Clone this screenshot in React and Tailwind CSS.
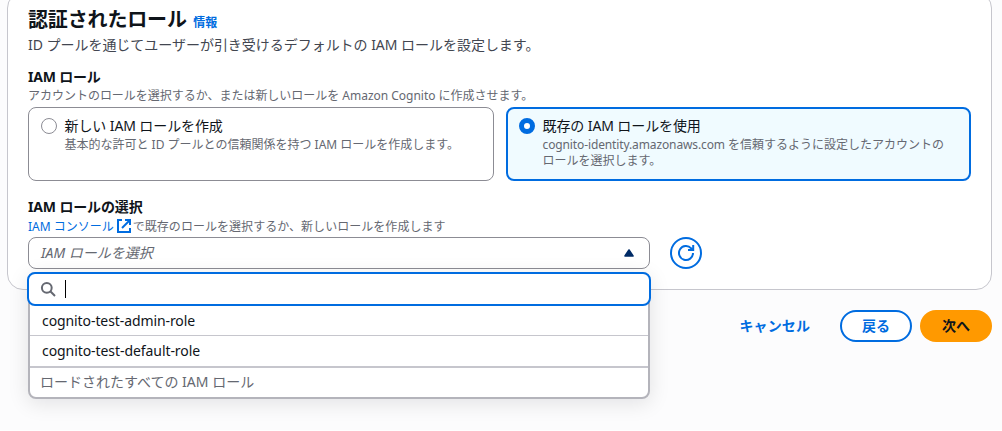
const ROLES = ['cognito-test-admin-role', 'cognito-test-default-role'];

function RoleOption({ checked, title, children }) {
  return (
    <div
      className={
        checked
          ? 'flex h-[74px] rounded-lg border-2 border-[#006ce0] bg-[#f0fbff] pt-[7px] pl-[11px]'
          : 'flex h-[74px] rounded-lg border border-[#8c8c94] bg-white pt-2 pl-3'
      }
    >
      <span
        className={
          checked
            ? 'mt-[2px] h-4 w-4 shrink-0 rounded-full border-5 border-[#006ce0] bg-white'
            : 'mt-[2px] h-4 w-4 shrink-0 rounded-full border border-[#8c8c94] bg-white'
        }
      />
      <div className="ml-[7.5px]">
        <div className="h-5 text-sm leading-5 tracking-[-0.1px] whitespace-nowrap text-[#0f141a]">{title}</div>
        <div className="mt-px text-xs leading-4 whitespace-nowrap text-[#656871]">{children}</div>
      </div>
    </div>
  );
}

function ExternalIcon() {
  return (
    <svg className="mr-px ml-[2px] inline-block h-4 w-4 align-[-3px]" viewBox="0 0 16 16" fill="none" stroke="#006ce0" strokeWidth="2">
      <path d="M6 2H2v12h12v-4" />
      <path d="M9 2h5v5" />
      <path d="M6 10l8-8" />
    </svg>
  );
}

function RefreshIcon() {
  return (
    <svg className="h-4 w-4 overflow-visible" viewBox="0 0 16 16" fill="none" stroke="#006ce0" strokeWidth="2">
      <path d="M15 8a7 7 0 1 1-1.8-4.7L15 5" />
      <path d="M15.2 0v5H10" />
    </svg>
  );
}

function RoleMenu() {
  return (
    <div className="absolute top-[35px] left-[-1px] w-[624px]">
      <div className="relative z-10 flex h-[34px] items-center rounded-lg border-2 border-[#006ce0] bg-white pl-[11px]">
        <svg className="h-4 w-4" viewBox="0 0 16 16" fill="none" stroke="#656871" strokeWidth="2">
          <circle cx="6.8" cy="6.8" r="4.9" />
          <path d="M10.3 10.3l4.7 4.7" />
        </svg>
        <span className="ml-[9px] h-[18px] w-px bg-black" />
      </div>
      <div className="mx-px -mt-[34px] rounded-lg border-2 border-[#b4b4bb] bg-white pt-[32px] shadow-[0_4px_20px_1px_rgba(0,7,22,0.10)]">
        <div className="h-[30px] border-b border-[#c6c6cd] pl-3 text-sm leading-[29px] tracking-[-0.09px] text-[#0f141a]">{ROLES[0]}</div>
        <div className="h-8 border-b-2 border-[#c6c6cd] pl-3 text-sm leading-[30px] tracking-[-0.07px] text-[#0f141a]">{ROLES[1]}</div>
        <div className="h-[29px] pl-[10px] text-sm leading-[28px] text-[#656871]">ロードされたすべての IAM ロール</div>
      </div>
    </div>
  );
}

export default function App() {
  return (
    <div lang="ja" className="h-[431px] w-[1002px] overflow-hidden border-b border-white bg-[#fcfcfd] px-[7px] font-['Noto_Sans','Noto_Sans_CJK_JP',sans-serif]">
      <main className="-mt-2 h-[298px] w-[985px] rounded-2xl border border-[#c6c6cd] bg-white px-5 pt-[15px]">
        <div className="flex h-6 items-center whitespace-nowrap">
          <h1 className="text-xl leading-6 font-bold tracking-[-0.15px] text-[#0f141a]">認証されたロール</h1>
          <a className="mt-[5px] ml-[6.5px] text-xs font-bold text-[#006ce0]">情報</a>
        </div>
        <p className="mt-[3px] h-5 text-sm leading-5 tracking-[-0.03px] whitespace-nowrap text-[#424650]">ID プールを通じてユーザーが引き受けるデフォルトの IAM ロールを設定します。</p>

        <h2 className="mt-3 h-5 text-sm leading-5 font-bold tracking-[-0.2px] text-[#0f141a]">IAM ロール</h2>
        <p className="mt-px h-4 text-xs leading-4 tracking-[-0.02px] whitespace-nowrap text-[#656871]">アカウントのロールを選択するか、または新しいロールを Amazon Cognito に作成させます。</p>
        <div className="mt-[3px] grid w-[943px] grid-cols-[466px_465px] gap-3">
          <RoleOption title="新しい IAM ロールを作成">基本的な許可と ID プールとの信頼関係を持つ IAM ロールを作成します。</RoleOption>
          <RoleOption checked title="既存の IAM ロールを使用">
            <span className="tracking-[-0.12px]">cognito-identity.amazonaws.com</span> を信頼するように設定したアカウントの
            <br />
            ロールを選択します。
          </RoleOption>
        </div>

        <h2 className="mt-4 h-5 text-sm leading-5 font-bold tracking-[-0.15px] text-[#0f141a]">IAM ロールの選択</h2>
        <p className="mt-px h-4 text-xs leading-4 whitespace-nowrap text-[#656871]">
          <a className="text-[#006ce0]">IAM コンソール<ExternalIcon /></a>
          <span className="tracking-[0.04px]">で既存のロールを選択するか、新しいロールを作成します</span>
        </p>
        <div className="mt-[3px] flex gap-5">
          <div className="relative h-8 w-[622px]">
            <div className="flex h-8 items-center justify-between rounded-lg border border-[#8c8c94] bg-white pr-[15px] pl-3">
              <span className="text-sm leading-5 text-[#656871] italic">IAM ロールを選択</span>
              <svg className="h-2 w-[10px]" viewBox="0 0 10 8">
                <path d="M5 1l4 6H1z" fill="#002b66" stroke="#002b66" strokeWidth="1.6" strokeLinejoin="round" />
              </svg>
            </div>
            <RoleMenu />
          </div>
          <button className="flex h-8 w-8 items-center justify-center rounded-full border-2 border-[#006ce0] bg-white">
            <RefreshIcon />
          </button>
        </div>
      </main>

      <footer className="mt-5 flex w-[985px] items-center justify-end text-sm font-bold">
        <button className="mr-[30px] tracking-[0.1px] text-[#006ce0]">キャンセル</button>
        <button className="h-8 w-[72px] rounded-full border-2 border-[#006ce0] bg-white text-[#006ce0]">戻る</button>
        <button className="ml-2 h-8 w-[72px] rounded-full bg-[#ff9900] text-[#0f141a]">次へ</button>
      </footer>
    </div>
  );
}
